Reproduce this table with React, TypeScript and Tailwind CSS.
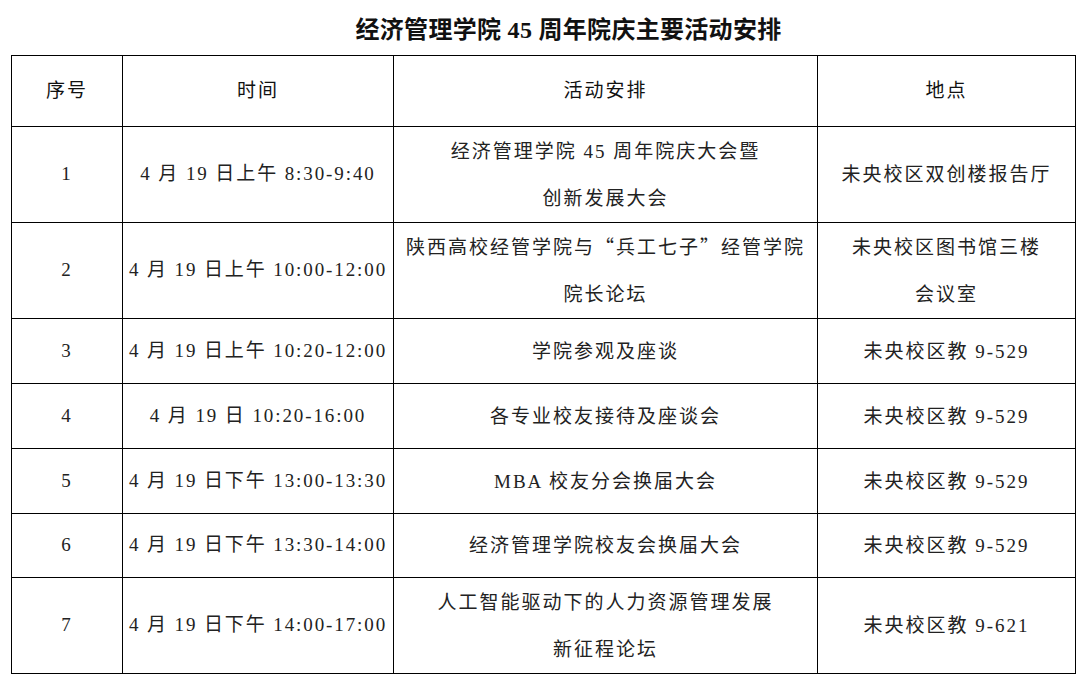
import type { ReactNode } from 'react';

const Q = ({ children }: { children: ReactNode }) => (
  <span className="font-['Noto_Sans_CJK_SC',sans-serif] leading-none">{children}</span>
);

const rows: { no: string; time: string; act: ReactNode[]; place: string[]; h: string }[] = [
  { no: '1', time: '4 月 19 日上午 8:30-9:40', act: ['经济管理学院 45 周年院庆大会暨', '创新发展大会'], place: ['未央校区双创楼报告厅'], h: 'h-[96px]' },
  {
    no: '2',
    time: '4 月 19 日上午 10:00-12:00',
    act: [<>陕西高校经管学院与<Q>“</Q>兵工七子<Q>”</Q>经管学院</>, '院长论坛'],
    place: ['未央校区图书馆三楼', '会议室'],
    h: 'h-[96px]',
  },
  { no: '3', time: '4 月 19 日上午 10:20-12:00', act: ['学院参观及座谈'], place: ['未央校区教 9-529'], h: 'h-[65px]' },
  { no: '4', time: '4 月 19 日 10:20-16:00', act: ['各专业校友接待及座谈会'], place: ['未央校区教 9-529'], h: 'h-[65px]' },
  { no: '5', time: '4 月 19 日下午 13:00-13:30', act: ['MBA 校友分会换届大会'], place: ['未央校区教 9-529'], h: 'h-[65px]' },
  { no: '6', time: '4 月 19 日下午 13:30-14:00', act: ['经济管理学院校友会换届大会'], place: ['未央校区教 9-529'], h: 'h-[64px]' },
  { no: '7', time: '4 月 19 日下午 14:00-17:00', act: ['人工智能驱动下的人力资源管理发展', '新征程论坛'], place: ['未央校区教 9-621'], h: 'h-[96px]' },
];

const Lines = ({ lines }: { lines: ReactNode[] }) => (
  <div className="flex flex-col items-center">
    {lines.map((l, i) => (
      <span key={i} className="whitespace-nowrap h-[47px] leading-[47px]">{l}</span>
    ))}
  </div>
);

export default function App() {
  return (
    <div className="w-[1088px] h-[689px] bg-white font-['Liberation_Serif','Noto_Sans_CJK_SC',serif] text-[#222]">
      <div className="h-[55px] flex items-center justify-center pl-[49px] pt-[4px]">
        <h1 className="text-[24px] font-bold text-[#111] tracking-[0.3px] font-['Liberation_Serif','Noto_Sans_CJK_SC',serif]">
          经济管理学院 45 周年院庆主要活动安排
        </h1>
      </div>
      <table className="ml-[11px] w-[1064px] border-collapse table-fixed text-[19px] tracking-[2px]">
        <colgroup>
          <col className="w-[111px]" />
          <col className="w-[271px]" />
          <col className="w-[424px]" />
          <col className="w-[258px]" />
        </colgroup>
        <thead>
          <tr className="h-[71px] text-[#111]">
            <th className="border border-black font-normal">序号</th>
            <th className="border border-black font-normal">时间</th>
            <th className="border border-black font-normal">活动安排</th>
            <th className="border border-black font-normal">地点</th>
          </tr>
        </thead>
        <tbody>
          {rows.map((r) => (
            <tr key={r.no} className={r.h}>
              <td className="border border-black text-center p-0">{r.no}</td>
              <td className="border border-black text-center p-0 whitespace-nowrap tracking-[1.9px]">{r.time}</td>
              <td className="border border-black p-0"><Lines lines={r.act} /></td>
              <td className="border border-black p-0"><Lines lines={r.place} /></td>
            </tr>
          ))}
        </tbody>
      </table>
    </div>
  );
}
